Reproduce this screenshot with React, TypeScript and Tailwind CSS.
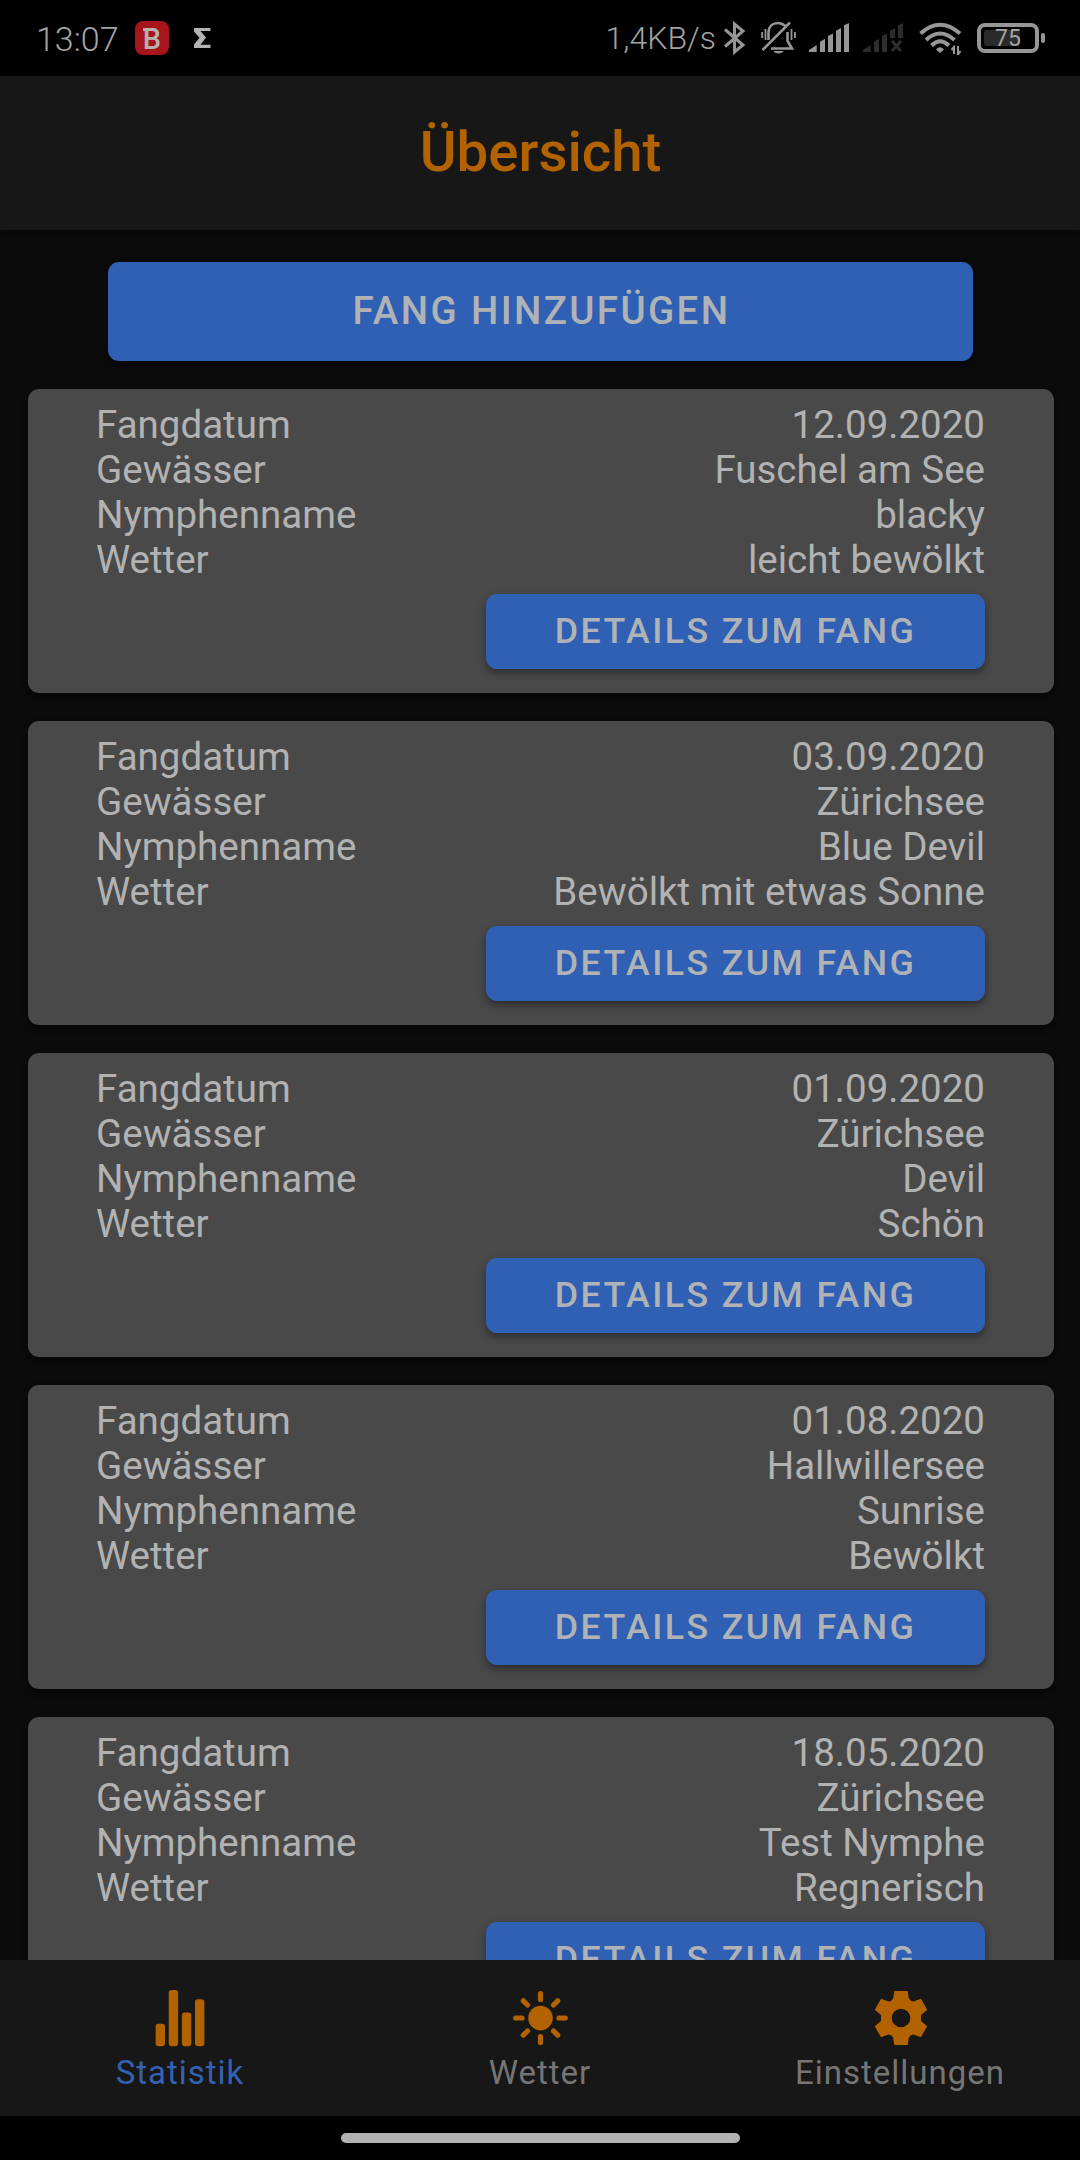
import React from 'react';

const catches = [
  ['12.09.2020', 'Fuschel am See', 'blacky', 'leicht bewölkt'],
  ['03.09.2020', 'Zürichsee', 'Blue Devil', 'Bewölkt mit etwas Sonne'],
  ['01.09.2020', 'Zürichsee', 'Devil', 'Schön'],
  ['01.08.2020', 'Hallwillersee', 'Sunrise', 'Bewölkt'],
  ['18.05.2020', 'Zürichsee', 'Test Nymphe', 'Regnerisch'],
];

const labels = ['Fangdatum', 'Gewässer', 'Nymphenname', 'Wetter'];

function StatusBar() {
  return (
    <div className="flex h-[76px] shrink-0 items-center bg-black pl-[36px] pr-[35px] text-[34px] font-light text-[#a3a3a3]">
      <span className="w-[99px] pt-[2px]">13:07</span>
      <span className="relative flex h-[34px] w-[34px] items-center justify-center rounded-[8px] bg-[#a5151b] pt-[2px] text-[29px] font-medium leading-none text-[#b9b0b0]">
        <span className="absolute left-[8px] top-[7px] h-[3px] w-[4px] bg-[#b9b0b0]" />
        B
      </span>
      <svg className="ml-[25px]" width="17" height="20" viewBox="0 0 17 20" fill="#b3b3b3">
        <path d="M0 0H16.500V3H6.500L12 9.500L6.500 16.700H16.500V20H0V16.500L5.500 9.700L0 3.500Z" />
      </svg>
      <span className="ml-auto text-[32px]">1,4KB/s</span>
      <svg className="ml-[8px]" width="22" height="34" viewBox="0 0 22 34" fill="none" stroke="#969696" strokeWidth="3">
        <path d="M1 8.500L19 24L10.500 31V3L19 10L1 25.500" />
      </svg>
      <svg className="ml-[15px]" width="36" height="34" viewBox="0 0 36 34" fill="none" stroke="#969696" strokeWidth="2.600">
        <path d="M7.500 19V12C7.500 5 12 2 17 2C20 2 22 3 24.500 5M26.500 11V20L31 27.500H10M1.500 29L29 1.500" />
        <path d="M1.200 11V17M4.500 8V19M30.500 8V19M34 11V17" strokeWidth="1.800" />
        <path d="M12 30H23Q17.500 35 12 30Z" fill="#969696" stroke="none" />
      </svg>
      <svg className="mb-[2px] ml-[12px]" width="41" height="29" viewBox="0 0 41 29" fill="#969696">
        <path d="M0 29V27L7.700 22V29ZM11 29V18.700L16 15.700V29ZM19 29V13L24 10.500V29ZM27 29V7.700L32 5V29ZM35 29V2.300L40 0V29Z" />
      </svg>
      <svg className="mb-[2px] ml-[13px]" width="41" height="29" viewBox="0 0 41 29" fill="#2d2d2d">
        <path d="M0 29V27L7.700 22V29ZM11 29V18.700L16 15.700V29ZM19 29V13L24 10.500V29ZM27 15V7.700L32 5V15ZM35 15V2.300L40 0V15Z" />
        <path d="M29 18L38 28M38 18L29 28" stroke="#2d2d2d" strokeWidth="3" />
      </svg>
      <svg className="ml-[15px] mt-[2px]" width="43" height="34" viewBox="0 0 43 34" fill="none" stroke="#969696" strokeWidth="4">
        <path d="M1.500 11.500Q21 -6 41 11.500M7 18Q21 5 35.500 18M12.500 23.500Q21 15 30 23.500" />
        <path d="M17 27.500Q21 23 25 27.500L21 31Z" fill="#969696" stroke="none" />
        <path d="M35 23.500V32M39 24V33M32.500 28L35 25M41.500 29L39 32.500" strokeWidth="2" />
      </svg>
      <span className="relative ml-[15px] flex h-[30px] w-[62px] items-center justify-center rounded-[8px] border-4 border-[#969696]">
        <span className="absolute left-[3px] top-[3px] h-[16px] w-[36px] rounded-[3px] bg-[#2b2b2b]" />
        <span className="relative pt-[1px] text-[23px] font-normal leading-none">75</span>
      </span>
      <span className="ml-[2px] h-[10px] w-[4px] rounded-[2px] bg-[#969696]" />
    </div>
  );
}

function CatchCard({ values }: { values: string[] }) {
  return (
    <div className="h-[304px] shrink-0 rounded-[11px] bg-[#494949] pl-[68px] pr-[69px] pt-[13px] shadow-[0_3px_6px_rgba(0,0,0,0.5)]">
      {labels.map((label, i) => (
        <div key={label} className="flex h-[45px] items-center justify-between text-[38.500px] leading-[45px] text-[#b2b2b2]">
          <span>{label}</span>
          <span>{values[i]}</span>
        </div>
      ))}
      <button className="ml-auto mt-[12px] flex h-[75px] w-[499px] items-center justify-center rounded-[11px] bg-[#2f60b3] text-[35.750px] font-medium tracking-[0.0675em] text-[#b0b2b5] shadow-[0_4px_8px_rgba(0,0,0,0.4)]">
        DETAILS ZUM FANG
      </button>
    </div>
  );
}

function TabBar() {
  return (
    <nav className="grid h-[156px] shrink-0 grid-cols-3 bg-[#171717] text-[33px] tracking-[0.03em] text-[#757575]">
      <div className="flex flex-col items-center pt-[28px] text-[#3362b0]">
        <svg width="60" height="60" viewBox="0 0 512 512" fill="#b36200">
          <rect x="48" y="304" width="80" height="192" rx="24" />
          <rect x="160" y="16" width="80" height="480" rx="24" />
          <rect x="272" y="208" width="80" height="288" rx="24" />
          <rect x="384" y="96" width="80" height="400" rx="24" />
        </svg>
        <span className="mt-[5px] leading-[40px]">Statistik</span>
      </div>
      <div className="flex flex-col items-center pt-[28px]">
        <svg width="60" height="60" viewBox="-30.500 -30 60 60" stroke="#b36200" strokeWidth="5.200" strokeLinecap="round">
          <circle r="12.300" fill="#b36200" stroke="none" />
          <path d="M0 -24.500V-18.500M0 24.500V18.500M-24.800 0H-18.500M24.800 0H18.500M-17.200 -17.200L-13 -13M17.200 17.200L13 13M-17.200 17.200L-13 13M17.200 -17.200L13 -13" />
        </svg>
        <span className="mt-[5px] leading-[40px]">Wetter</span>
      </div>
      <div className="flex flex-col items-center pt-[28px]">
        <svg width="60" height="60" viewBox="-31 -30 60 60" fill="#b36200">
          <path
            fillRule="evenodd"
            d="M-6.700 -27H6.700L7.900 -19.500Q9.500 -16.500 12.400 -16.500L20 -19.200L26.200 -8.200L20 -3V3L26.200 8.200L20 19.200L12.400 16.500Q9.500 16.500 7.900 19.500L6.700 27H-6.700L-7.900 19.500Q-9.500 16.500 -12.400 16.500L-20 19.200L-26.200 8.200L-20 3V-3L-26.200 -8.200L-20 -19.200L-12.400 -16.500Q-9.500 -16.500 -7.900 -19.500ZM0 -9.300A9.300 9.300 0 1 0 0 9.300A9.300 9.300 0 1 0 0 -9.300Z"
          />
        </svg>
        <span className="mt-[5px] leading-[40px]">Einstellungen</span>
      </div>
    </nav>
  );
}

export default function App() {
  return (
    <div className="flex h-[2160px] w-[1080px] flex-col overflow-hidden bg-[#0b0b0b] font-['Roboto',sans-serif]">
      <StatusBar />
      <header className="flex h-[154px] shrink-0 items-center justify-center bg-[#171717] pb-[2px] pl-[1px] text-[56.400px] font-medium text-[#b36200] shadow-[0_3px_8px_rgba(0,0,0,0.4)]">
        Übersicht
      </header>
      <main className="flex min-h-0 flex-1 flex-col gap-[28px] overflow-hidden pl-[28px] pr-[26px] pt-[32px]">
        <button className="ml-[80px] mr-[81px] flex h-[99px] shrink-0 items-center justify-center rounded-[11px] bg-[#2f60b3] pb-[2px] pl-[2px] text-[38.500px] font-medium tracking-[0.062em] text-[#b0b2b5] shadow-[0_4px_8px_rgba(0,0,0,0.4)]">
          FANG HINZUFÜGEN
        </button>
        {catches.map((values) => (
          <CatchCard key={values[0]} values={values} />
        ))}
      </main>
      <TabBar />
      <div className="flex h-[44px] shrink-0 justify-center bg-black pt-[17px]">
        <div className="h-[10px] w-[399px] rounded-full bg-[#b2b2b2]" />
      </div>
    </div>
  );
}
